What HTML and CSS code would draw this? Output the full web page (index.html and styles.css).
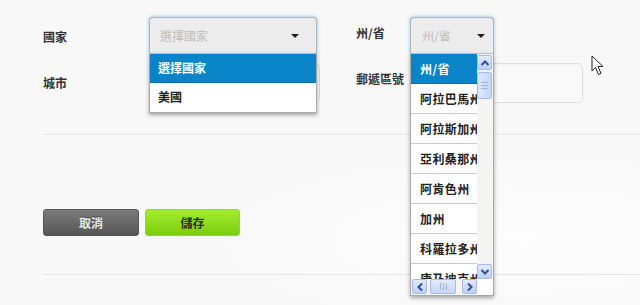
FILE: index.html
```html
<!DOCTYPE html>
<html lang="zh-Hant">
<head>
<meta charset="utf-8">
<title>地址表單</title>
<link rel="stylesheet" href="styles.css">
</head>
<body>
<div class="page">
  <form class="form">
    <div class="grid">
      <label class="lbl lbl-left">國家</label>
      <div class="field">
        <div class="select sel-country"><span class="ph">選擇國家</span><span class="caret"></span></div>
        <div class="dropdown dd-country">
          <div class="opt opt-sel">選擇國家</div>
          <div class="opt">美國</div>
        </div>
      </div>
      <label class="lbl lbl-right">州/省</label>
      <div class="field">
        <div class="select sel-state"><span class="ph">州/省</span><span class="caret"></span></div>
        <div class="dropdown dd-state">
          <div class="dd-body">
            <div class="opt opt-sel">州/省</div>
            <div class="opt">阿拉巴馬州</div>
            <div class="opt">阿拉斯加州</div>
            <div class="opt">亞利桑那州</div>
            <div class="opt">阿肯色州</div>
            <div class="opt">加州</div>
            <div class="opt">科羅拉多州</div>
            <div class="opt">康乃迪克州</div>
          </div>
          <div class="vscroll">
            <div class="sb-btn"><svg width="10" height="8" viewBox="0 0 10 8"><path d="M1.5 6 L5 2.5 L8.5 6" fill="none" stroke="#2f4f9a" stroke-width="2"/></svg></div>
            <div class="sb-thumb sb-thumb-v"><span class="grip-v"></span></div>
            <div class="sb-track"></div>
            <div class="sb-btn"><svg width="10" height="8" viewBox="0 0 10 8"><path d="M1.5 2 L5 5.5 L8.5 2" fill="none" stroke="#2f4f9a" stroke-width="2"/></svg></div>
          </div>
          <div class="hscroll">
            <div class="sb-btn"><svg width="8" height="10" viewBox="0 0 8 10"><path d="M6 1.5 L2.5 5 L6 8.5" fill="none" stroke="#2f4f9a" stroke-width="2"/></svg></div>
            <div class="sb-thumb sb-thumb-h"><span class="grip-h"></span></div>
            <div class="sb-track"></div>
            <div class="sb-btn"><svg width="8" height="10" viewBox="0 0 8 10"><path d="M2 1.5 L5.5 5 L2 8.5" fill="none" stroke="#2f4f9a" stroke-width="2"/></svg></div>
          </div>
          <div class="corner"></div>
        </div>
      </div>
      <label class="lbl lbl-left">城市</label>
      <div class="field"><input class="input in-city" type="text"></div>
      <label class="lbl lbl-right">郵遞區號</label>
      <div class="field"><input class="input in-zip" type="text"></div>
    </div>
    <div class="rule rule-top"></div>
    <div class="actions">
      <button type="button" class="btn btn-cancel">取消</button>
      <button type="button" class="btn btn-save">儲存</button>
    </div>
    <div class="rule rule-bottom"></div>
  </form>
  <svg class="cursor" width="14" height="22" viewBox="0 0 14 22"><path d="M1 1 L1 16 L4.5 12.5 L7.5 19.5 L10 18.4 L7 11.5 L12 11.5 Z" fill="#fff" stroke="#222" stroke-width="1" stroke-linejoin="round"/></svg>
</div>
</body>
</html>
```
FILE: styles.css
```css
* { box-sizing: border-box; }
html, body {
  margin: 0;
  padding: 0;
  width: 640px;
  height: 305px;
  overflow: hidden;
}
body {
  background: #f7f8f7;
  font-family: "Noto Sans CJK TC", "Noto Sans CJK SC", "Liberation Sans", sans-serif;
  font-size: 12px;
  color: #333;
}
.page {
  position: relative;
  width: 640px;
  height: 305px;
  background: radial-gradient(ellipse 320px 90px at 520px 240px, #fdfdfd 0%, rgba(253,253,253,0) 100%), #f7f8f7;
}
.form {
  padding: 17px 0 0 43px;
  margin: 0;
}
.grid {
  display: grid;
  grid-template-columns: 106px 207px 54px 173px;
  row-gap: 9px;
  align-items: start;
}
.lbl {
  font-weight: 700;
  font-size: 12px;
  line-height: 14px;
  color: #333;
}
.lbl-left { padding-top: 13px; }
.lbl-right { padding-top: 9px; }
.field { position: relative; }

.select {
  position: relative;
  height: 37px;
  border: 1px solid #aeb4b8;
  border-bottom-color: #c4c4c4;
  border-radius: 4px 4px 0 0;
  background: #ececec;
  box-shadow: 0 0 3px 1px rgba(120, 190, 235, 0.55);
  display: flex;
  align-items: center;
  padding-left: 10px;
  color: #bcbcbc;
  font-size: 12px;
}
.sel-country { width: 168px; }
.sel-state { width: 84px; padding-left: 11px; }
.caret {
  position: absolute;
  right: 17px;
  top: 16px;
  width: 0;
  height: 0;
  border-left: 4px solid transparent;
  border-right: 4px solid transparent;
  border-top: 4px solid #222;
}
.sel-state .caret { right: 8px; }

.dropdown {
  position: absolute;
  left: 0;
  top: 37px;
  z-index: 10;
  background: #fff;
  border: 1px solid #a9a9a9;
  border-top: none;
  box-shadow: 0 2px 4px rgba(0, 0, 0, 0.35);
}
.dd-country { width: 168px; }
.opt {
  height: 30px;
  line-height: 29px;
  padding-left: 8px;
  border-bottom: 1px solid #c9c9c9;
  font-weight: 700;
  font-size: 12px;
  color: #222;
  white-space: nowrap;
  overflow: hidden;
}
.opt:last-child { border-bottom: none; }
.opt-sel {
  background: #0a84c9;
  color: #fff;
  border-bottom-color: #0a6ea8;
}
.dd-country .opt { height: 29px; line-height: 28px; }

.dd-state {
  width: 84px;
  height: 242px;
  display: grid;
  grid-template-columns: 66px 16px;
  grid-template-rows: 225px 16px;
}
.dd-state .opt {
  padding-left: 9px;
  letter-spacing: 0.4px;
}
.dd-state .opt:last-child { border-bottom: 1px solid #c9c9c9; }
.dd-body { overflow: hidden; }

.vscroll {
  display: flex;
  flex-direction: column;
  gap: 2px;
  background: #f4f4f2;
  padding: 1px 0 0 0;
}
.hscroll {
  display: flex;
  gap: 3px;
  background: #f4f4f2;
  padding: 0 0 0 1px;
}
.sb-btn {
  width: 15px;
  height: 15px;
  border: 1px solid #a6bbe6;
  border-radius: 2px;
  background: linear-gradient(#e3ebfc, #bccff6);
  display: flex;
  align-items: center;
  justify-content: center;
  flex: none;
}
.sb-thumb {
  border: 1px solid #a6bbe6;
  border-radius: 2px;
  background: linear-gradient(90deg, #dfe8fb, #c4d5f7);
  display: flex;
  align-items: center;
  justify-content: center;
  flex: none;
}
.sb-thumb-v { width: 15px; height: 27px; }
.sb-thumb-h { width: 26px; height: 15px; background: linear-gradient(#e3ebfc, #c4d5f7); }
.grip-v {
  width: 7px;
  height: 7px;
  border-top: 1px solid #9fb3de;
  border-bottom: 1px solid #9fb3de;
  background: linear-gradient(#9fb3de, #9fb3de) center / 7px 1px no-repeat;
}
.grip-h {
  width: 7px;
  height: 7px;
  border-left: 1px solid #9fb3de;
  border-right: 1px solid #9fb3de;
  background: linear-gradient(#9fb3de, #9fb3de) center / 1px 7px no-repeat;
}
.sb-track { flex: 1; }
.corner { background: #fff; }

.input {
  display: block;
  height: 40px;
  border: 1px solid #dedede;
  border-radius: 5px;
  background: #f9f9f9;
  box-shadow: inset 0 1px 2px rgba(0, 0, 0, 0.04);
  margin: 0;
  padding: 0 8px;
  outline: none;
  font: inherit;
}
.in-city { width: 171px; }
.in-zip { width: 173px; }

.rule {
  height: 0;
  border-top: 1px solid #e2e3e2;
  border-bottom: 1px solid #fbfbfb;
}
.rule-top { margin-top: 31px; }
.actions {
  display: flex;
  gap: 6px;
  margin-top: 73px;
}
.btn {
  height: 27px;
  border-radius: 3px;
  font-family: inherit;
  font-weight: 700;
  font-size: 12px;
  line-height: 25px;
  padding: 0;
  cursor: pointer;
}
.btn-cancel {
  width: 96px;
  border: 1px solid #555;
  background: linear-gradient(#7b7b7b, #565656);
  color: #ececec;
  text-shadow: 0 -1px 0 rgba(0, 0, 0, 0.4);
}
.btn-save {
  width: 95px;
  border: 1px solid #8fd82a;
  background: linear-gradient(#a4ec32, #7ccd0c);
  color: #2b2b2b;
}
.rule-bottom { margin-top: 38px; }

.cursor {
  position: absolute;
  left: 591px;
  top: 55px;
}
```
